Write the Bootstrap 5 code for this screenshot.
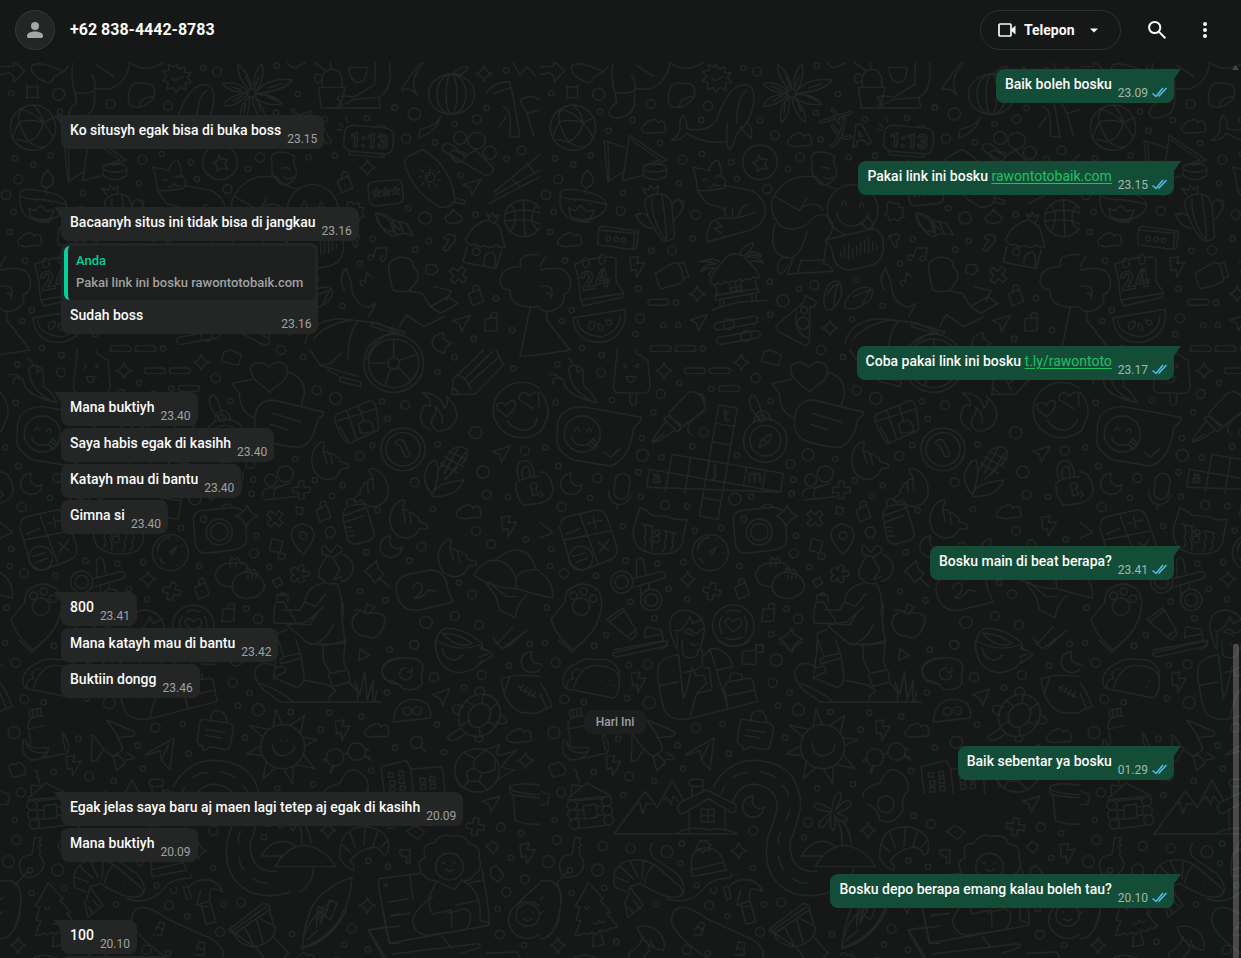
<!DOCTYPE html>
<html lang="id">
<head>
<meta charset="utf-8">
<meta name="viewport" content="width=device-width, initial-scale=1">
<title>+62 838-4442-8783</title>
<link href="https://cdn.jsdelivr.net/npm/bootstrap@5.3.0/dist/css/bootstrap.min.css" rel="stylesheet">
<style>
:root{--pane:#161717;--in:#242626;--out:#144d37;--ink:#fafafa;--muted:#a0a1a1}
body{background:var(--pane);color:var(--ink);font-family:Roboto,"Liberation Sans",sans-serif;font-size:14px;line-height:20px}
.topbar{height:62px;padding:0 16px 2px 15px;background:var(--pane)}
.avatar{width:40px;height:40px;background:var(--in);border:1px solid #363838;color:#a5a6a6}
.contact{font-size:16px;font-weight:700;line-height:24px;margin:0 0 0 15px}
.call-btn{height:40px;width:141px;border:1px solid #2e3030;border-radius:20px;background:none;color:var(--ink);font-weight:700;padding:0 17px}
.call-btn svg:last-child{margin-left:auto;margin-right:1px}
.icon-btn{width:40px;height:40px;border:0;background:none;color:var(--ink);padding:0}
.chat{min-height:0}
.doodles{z-index:0;inset:0}
.thread{z-index:1;padding:7px 67px 0 61px}
.msg{position:relative;display:flex;align-items:flex-end;width:max-content;max-width:80%;min-height:34px;padding:0 7px 0 9px;border-radius:8px;margin-bottom:2px;background:var(--in)}
.msg p{margin:0;padding:5px 0 9px;font-weight:500}
.msg time{font-size:12px;line-height:16px;color:var(--muted);margin:0 0 2px 6px;white-space:nowrap}
.sent{align-self:flex-end;background:var(--out);padding-right:6px}
.sent time{color:#a1b8af}
.sent svg{margin:0 0 5px 4px}
.sent a{color:#21c063;text-underline-offset:2px;font-weight:400}
.tail{margin-top:10px}
.tail::before{content:"";position:absolute;top:0;left:-7px;width:15px;height:12px;background:inherit;clip-path:polygon(0 0,100% 0,100% 100%,7px 10px)}
.sent.tail::before{left:auto;right:-7px;clip-path:polygon(0 0,100% 0,8px 10px,0 100%)}
.thread>.msg:first-child{margin-top:0}
.with-quote{flex-direction:column;align-items:stretch;padding:3px 3px 0;height:91px}
.quote{background:#1d1f1f;border-left:4px solid #06cf9c;border-radius:6px;font-size:13px;line-height:20px;height:54px;padding:5px 12px 0 8px;color:var(--muted);font-weight:500}
.quote strong{display:block;font-weight:500;color:#06cf9c;margin-bottom:2px;line-height:20px}
.with-quote .line{padding:0 4px 0 6px;height:34px}
.day{background:#1d1f1f;color:var(--muted);font-size:12px;font-weight:500;line-height:24px;width:62px;border-radius:8px;margin:10px 5px 2px 0}
.bar{z-index:2;right:2px;width:6px;top:65%;bottom:0;background:#ffffff38;border-radius:3px 3px 0 0}
.bar-up{z-index:2;right:2px;top:3px}
</style>
</head>
<body class="d-flex flex-column vh-100 overflow-hidden">
<header class="topbar d-flex align-items-center flex-shrink-0">
  <div class="avatar rounded-circle d-flex align-items-center justify-content-center">
    <svg width="24" height="24" viewBox="0 0 24 24" fill="currentColor" aria-hidden="true"><circle cx="12" cy="8" r="4"/><path d="M4 18.2v-.8c0-.9.4-1.600 1.200-2.100C7 14 9.400 13.400 12 13.400s5 .6 6.800 1.900c.8.5 1.200 1.200 1.200 2.100v.8c0 1-.8 1.800-1.800 1.800H5.800c-1 0-1.800-.8-1.800-1.800z"/></svg>
  </div>
  <h1 class="contact">+62 838-4442-8783</h1>
  <div class="ms-auto d-flex align-items-center">
    <button class="call-btn d-flex align-items-center" type="button">
      <svg width="18" height="16" viewBox="0 0 18 16" aria-hidden="true"><rect x="1" y="2" width="12" height="12" rx="1" fill="none" stroke="currentColor" stroke-width="1.700"/><path d="M13.500 7 17.500 3.500v9L13.500 9z" fill="currentColor"/></svg>
      <span class="ms-2">Telepon</span>
      <svg width="16" height="10" viewBox="0 0 16 10" aria-hidden="true"><path d="M4 3.500h8L8 7.500z" fill="currentColor"/></svg>
    </button>
    <button class="icon-btn ms-3" type="button" aria-label="Cari"><svg width="24" height="24" viewBox="0 0 24 24" fill="none" stroke="currentColor" stroke-width="2" aria-hidden="true"><circle cx="9.700" cy="9.500" r="5.600"/><path d="M13.800 13.600 20.400 20.200"/></svg></button>
    <button class="icon-btn ms-2" type="button" aria-label="Menu"><svg width="24" height="24" viewBox="0 0 24 24" fill="currentColor" aria-hidden="true"><circle cx="12" cy="6" r="2"/><circle cx="12" cy="12" r="2"/><circle cx="12" cy="18" r="2"/></svg></button>
  </div>
</header>

<main class="chat position-relative flex-grow-1 overflow-hidden">
  <svg class="doodles position-absolute w-100 h-100" aria-hidden="true">
    <defs>
      <path id="spark" d="M0-24Q5-5 24 0Q5 5 0 24Q-5 5-24 0Q-5-5 0-24Z"/>
      <path id="cloud" d="M-24 20a12 12 0 0 1-2-24a10 10 0 0 1 13-10a14 14 0 0 1 25 6a10 10 0 0 1 20 9a10 10 0 0 1-14 16q-7 6-14 2q-12 6-28 1z"/>
      <path id="bolt" d="M-22-26 4-30-2-10 22-12-2 32-4 8-18 12z"/>
      <path id="moon" d="M0-30a32 32 0 1 0 32 32q-10 10-22 4Q-10-6 0-30z"/>
      <path id="plane" d="M-26-8 26-24 0 24-6 2z"/>
      <path id="lock" d="M-20-8 12-22 24 14-8 28zM-6-14q-6-18 6-20t10 12M2 6h1"/>
      <path id="cross" d="M-8-26h16v18h18v16H8v18H-8V8h-18V-8h18z"/>
      <path id="hand" d="M-46 28q-6-40 16-60q16-10 12 14l2 16q10-14 20 0q12-8 18 4q14-2 16 12l26 4q10 14-18 16q-8 40-42 40q-36 0-50-46zM-14-2 0 26M6-2 18 26"/>
      <pattern id="wall" width="540" height="900" patternUnits="userSpaceOnUse" patternTransform="translate(0 -2)">
        <g fill="none" stroke="#242626" stroke-width="4.200" stroke-linecap="round" stroke-linejoin="round">
          <g id="upper" transform="scale(.3333)">
            <path stroke-width="20" d="M34 100h0M180 155h0M206 212h0M278 180h0M45 295h0M152 286h0M100 314h0M360 249h0M486 282h0M573 307h0M591 357h0M417 370h0M249 399h0M41 456h0M30 516h0M458 536h0M334 572h0M75 602h0M689 665h0M295 686h0M408 728h0M370 796h0M414 796h0M691 764h0M66 783h0M95 751h0M286 822h0M126 864h0M185 885h0M489 866h0M484 180h0M660 182h0M828 158h0M842 238h0M744 327h0M610 24h0M830 17h0M894 102h0M975 178h0M1101 174h0M926 292h0M1005 287h0M1184 143h0M777 687h0M948 660h0M1028 738h0M937 778h0M909 891h0M1080 611h0M1118 537h0"/>
            <path stroke="#161717" stroke-width="12" d="M34 100h0M180 155h0M206 212h0M278 180h0M45 295h0M152 286h0M100 314h0M360 249h0M486 282h0M573 307h0M591 357h0M417 370h0M249 399h0M41 456h0M30 516h0M458 536h0M334 572h0M75 602h0M689 665h0M295 686h0M408 728h0M370 796h0M414 796h0M691 764h0M66 783h0M95 751h0M286 822h0M126 864h0M185 885h0M489 866h0M484 180h0M660 182h0M828 158h0M842 238h0M744 327h0M610 24h0M830 17h0M894 102h0M975 178h0M1101 174h0M926 292h0M1005 287h0M1184 143h0M777 687h0M948 660h0M1028 738h0M937 778h0M909 891h0M1080 611h0M1118 537h0"/>
            <path stroke-width="31" d="M332 132h0M504 138h0M651 35h0M427 299h0M780 292h0M705 226h0M682 387h0M467 464h0M242 453h0M55 358h0M18 405h0M396 571h0M300 775h0M823 675h0M843 870h0"/>
            <path stroke="#161717" stroke-width="23" d="M332 132h0M504 138h0M651 35h0M427 299h0M780 292h0M705 226h0M682 387h0M467 464h0M242 453h0M55 358h0M18 405h0M396 571h0M300 775h0M823 675h0M843 870h0"/>
            <circle cx="176" cy="103" r="18"/><circle cx="729" cy="722" r="18"/>
            <path d="M0 20h42V4l32 28-32 34V50L28 38 0 44M94 20Q92 50 145 68Q160 66 160 52L192 34 205 18M94 20q10-14 40-6t56 20M79 78q18 6 36 0q-6 18 0 36q-18-4-36 0q6-18 0-36z"/>
            <circle cx="99" cy="203" r="68"/><path d="M60 148Q96 152 130 188Q148 210 160 232M130 188Q90 176 57 186L40 226M57 186Q50 150 80 140M57 186Q68 220 86 246Q110 262 128 262M130 188Q120 230 86 246L50 238M130 188Q124 158 100 136M130 188l34-16"/>
            <path d="M218 10Q212 60 224 96 Q256 106 284 92Q288 60 274 44M290 16 342 50M390 6Q380 70 330 86Q310 90 284 84M224 96 230 128Q200 150 210 168Q230 180 250 170Q284 160 284 120V92M396 12Q440 40 490 8"/>
            <path d="M414 68 450 72Q466 78 464 100Q462 120 440 132Q420 148 392 138Q382 126 386 104Q388 72 414 68zM420 142Q414 120 440 114L464 106"/>
            <path d="M528 12l8 16 18-8 0 18 18 0-10 14 12 14-18 4 2 20-18-8-12 16-8-16-18 6 2-20-16-6 12-12-12-16 18-2 0-18 16 8zM515 54l10 8 24-12"/>
            <path d="M394 240Q420 226 420 208Q416 180 430 166Q446 186 440 206Q500 220 530 180Q560 90 600 76Q640 66 642 110Q640 180 590 220Q580 260 568 270Q556 250 562 190M622 90Q590 110 590 190M394 240q26 4 46-20Q500 256 560 244M582 138h1M600 200Q616 220 634 236Q640 200 620 186"/>
            <circle cx="755" cy="100" r="12"/><path d="M748 88Q708 50 714 12Q748 40 756 88M764 90Q756 40 786 12Q796 50 772 90M770 92Q810 50 876 60Q850 96 768 100M768 104Q820 100 846 132Q800 140 764 112M762 112Q800 150 796 186Q764 166 756 114M748 112Q752 160 726 188Q710 150 746 112M742 106Q710 140 672 138Q676 108 740 100M742 94Q700 104 668 72Q700 58 744 92M738 50 750 78M776 50 766 78M806 84l40-14M800 108l30 14M776 130l6 24M736 130l-4 30M700 122l28-14M694 80l30 10"/>
            <path d="M956 82H1036L1020 144H964zM968 80Q960 30 996 28Q1030 30 1026 80M964 46q-24-12-20 10t20 6M944 8 980 34M992 6V26M1048 22H1100Q1102 66 1074 68Q1046 60 1048 22zM1126 6 1124 74 1060 112Q1012 100 1012 118 1030 124 1012 138M1012 144H1142L1136 112 1060 118 1012 144M1168 6Q1180 90 1136 112M862 6q8 20 26 16l28-14"/>
            <use href="#cloud" x="342" y="198"/><use href="#cloud" x="780" y="238"/><use href="#cloud" x="90" y="538"/>
            <path d="M192 242 204 366 248 336M192 242 256 262M204 250 208 362M268 226 248 362 310 346M268 226 380 300 340 316M274 240 360 300 310 318"/><ellipse cx="345" cy="324" rx="35" ry="12"/><path d="M310 324V346Q344 372 380 346V324"/>
            <path d="M844 186 932 158M878 150Q890 160 896 186M914 176Q900 250 874 258M878 200Q910 246 930 230" stroke-width="12"/><path stroke="#161717" d="M844 186 932 158M878 150Q890 160 896 186M914 176Q900 250 874 258M878 200Q910 246 930 230"/>
            <path d="M938 262 948 196Q956 188 966 194L994 246Q990 256 980 250L972 240 952 242 948 260zM958 214 956 230 966 230z"/>
            <rect x="1032" y="200" width="148" height="78" rx="24" transform="rotate(5 1106 240)"/><path d="M1048 272v12l104 8v-10M1134 200q12-10 26 6M1028 200l-10-10M1044 188l-6-14M1026 210l-14-2"/>
            <text x="1048" y="258" font-family="Roboto,sans-serif" font-size="58" font-weight="700" transform="rotate(4 1048 258)">1:13</text>
            <circle cx="660" cy="307" r="52"/><path d="M656 284l8 14 18 0-8 14 10 16-18-4-14 10-2-18-12-8 16-6z"/>
            <path d="M142 330Q108 372 138 384Q180 370 142 330zM60 406Q54 480 126 484Q198 470 200 434M60 406Q60 380 116 392 Q190 400 200 434Q150 420 100 418Q66 414 60 406zM118 486h32M92 470 86 444 104 452 122 436 140 454 162 450 152 474Q120 486 92 470zM104 422h1M130 418h1M152 432h1M138 384v20"/>
            <path d="M320 404 306 384 326 390 330 376 342 388 354 378 352 402M316 440Q306 410 350 402Q390 400 396 440L404 530Q390 546 370 542Q330 500 316 440zM336 416Q332 480 378 540M366 408Q376 470 380 536M396 440Q400 410 432 424Q430 456 402 480M336 506Q300 500 288 466Q300 452 326 470M286 464h16M416 418l14 20"/>
            <path d="M176 508Q180 496 196 500L296 514 290 560Q284 570 270 568L176 554Q170 550 176 508zM178 510 284 520 294 514M284 522 280 566"/><circle cx="205" cy="536" r="7"/><circle cx="229" cy="538" r="7"/><circle cx="251" cy="541" r="7"/>
            <path d="M458 322Q490 326 506 332Q516 300 534 300Q546 330 544 346L558 362 552 384Q500 396 472 390Q470 350 458 322zM490 362q6-10 12 0M528 352q6-8 14-2M506 380q12 4 16-10 4 12 20 6M552 376 636 392Q680 420 676 460Q670 500 610 516L500 546Q500 480 540 474Q600 480 646 456M500 430 474 394M500 430 552 446 560 472M596 470Q600 440 622 434M556 440v24M578 442v26M530 484l16 16-24 6 24 14"/>
            <path d="M702 408Q730 360 780 350L828 350Q850 380 894 388M702 408 778 452 800 416M702 408Q680 450 720 496Q750 520 800 494Q850 436 878 490Q880 520 860 536M706 490Q680 580 740 594 Q780 600 802 512M790 440Q830 420 850 452M816 310Q806 280 836 276 Q870 276 884 290L880 304 890 334Q890 350 880 360Q850 390 830 360L816 340zM846 324q18-4 24 4M850 350q16 14 30 0M716 640Q704 600 740 590M744 642 758 596M772 642 784 600M716 640Q730 646 744 616M744 642 878 634Q870 610 850 612L860 540M784 602 850 600"/>
            <circle cx="938" cy="450" r="76"/><path d="M906 438q6-30 14 0M958 442q6-30 14 0M890 460Q900 500 940 498Q980 490 984 460M962 486 982 508Q1004 506 1000 490L984 472"/><path fill="#161717" d="M856 540 1000 506Q1034 520 1030 560Q1030 610 980 620L930 630Q880 630 874 560z"/><path d="M902 574v16M914 560v30M926 552v46M938 566v26M950 558v30M962 546v36M974 544v34M986 534v44M998 546v24M1010 554v12"/>
            <path d="M1042 430q10-10 18 2l16-4 2 14 14 2-6 14 8 12-14 4-4 10-14-8-14 6-4-14-10-4 8-10zM1046 528 1066 562 1074 556 1068 544Q1088 530 1072 522zM1128 460Q1132 510 1178 516Q1180 470 1128 460M1176 486 1200 510M1114 600a8 8 0 1 1 6-8l8-28h34l-6 32a8 8 0 1 1-6-8M1090 676a8 8 0 1 1 6-8l4-30 14 12"/>
            <path d="M104 612 140 600M150 598 184 592M196 592 220 592Q228 594 228 602V664L250 696 246 712 130 738 122 720 250 700M122 720 116 660 104 612"/><ellipse cx="138" cy="608" rx="10" ry="15"/><ellipse cx="186" cy="598" rx="10" ry="15"/>
            <text x="126" y="692" font-family="Roboto,sans-serif" font-size="76" font-weight="700" transform="rotate(-10 130 692)">24</text>
            <use href="#bolt" x="292" y="620"/><path d="M346 640 400 608Q416 604 424 628L430 660Q426 672 364 686Q354 680 346 640zM420 610 432 606 446 650 432 654"/>
            <path d="M510 660 520 640 560 590Q580 574 610 588L650 630 658 650Q650 660 640 650 630 666 620 654 608 670 598 658 584 670 576 660 564 674 556 664 540 680 532 668 516 682 510 660zM526 676 532 706 652 686 646 660M568 672 574 696 606 690 602 666M586 670 590 694M570 684 604 678M524 706 654 686 656 698 528 720zM540 720v20M552 718v20M636 704v20M648 702v20M518 750 540 742 580 730 620 724 680 722M600 586Q600 560 640 548Q640 566 614 586 Q650 564 664 590Q640 580 620 590Q660 590 670 610 Q650 600 630 604M540 606Q520 590 478 606Q500 600 530 612Q490 610 482 636Q500 620 526 624Q500 640 510 650"/>
            <use href="#spark" x="472" y="702"/><use href="#spark" x="870" y="804"/><use href="#plane" x="476" y="788"/>
            <rect x="324" y="718" width="62" height="18" rx="9"/><rect x="331" y="857" width="62" height="18" rx="9"/><rect x="406" y="857" width="62" height="18" rx="9"/>
            <path d="M98 774 256 748Q262 820 200 844Q110 860 98 774zM112 780Q120 830 190 830Q240 810 240 766M150 786Q140 806 152 810Q170 800 164 784zM176 790Q170 810 186 812Q196 800 176 790zM196 780Q200 800 216 792Q220 780 196 780"/>
            <g transform="rotate(-10 590 790)"><rect x="522" y="778" width="132" height="22" rx="11"/><circle cx="566" cy="789" r="16"/><rect x="522" y="822" width="132" height="22" rx="11"/><circle cx="612" cy="833" r="16"/></g>
            <path d="M796 706 830 726 820 742 810 742 808 848Q800 860 790 854L716 816Q700 804 714 792L792 726zM770 754Q760 820 804 834"/><circle cx="790" cy="790" r="18"/><circle cx="792" cy="750" r="10"/>
            <path d="M860 750Q840 720 868 672Q896 650 904 680Q910 720 880 744Q870 754 860 750zM862 704Q880 670 896 672Q880 700 884 740M914 742Q912 710 960 684Q994 676 998 696Q996 726 950 744Q920 750 914 742zM940 710 990 690Q980 710 966 736"/>
            <path d="M0 620Q20 580 20 590M0 630Q90 610 92 670Q90 700 70 704Q80 740 30 754Q10 756 0 744M20 750V780L90 870 0 884M0 680Q40 670 36 706M20 700Q34 700 34 714"/>
          </g>
          <g transform="scale(.3444 .3333)">
            <ellipse cx="1311" cy="103" rx="67" ry="60"/><ellipse cx="1311" cy="103" rx="42" ry="60"/><ellipse cx="1311" cy="103" rx="16" ry="60"/><path d="M1284 48q30-16 56 0M1282 158q28 12 54 0M1316 42q16-24 42-22 0 18-30 26M1280 170l-4 8q-10 36-60 56l4-26q40-8 56-30M1220 10Q1180 60 1166 90 1190 80 1210 104 1186 60 1228 10"/>
            <use href="#spark" x="1405" y="41"/><path d="M1410 100Q1440 60 1480 66L1490 110 1510 232 1480 228Q1490 150 1460 140M1432 100 1480 84M1510 120Q1540 100 1568 120M1510 120 1530 160 1568 150M1490 10 1510 46 1530 20 1556 48M1530 160 1550 230M1450 200 1470 170"/>
            <path d="M1286 256Q1300 244 1320 260L1350 290 1380 270 1430 320Q1436 346 1410 346L1300 280Q1280 270 1286 256zM1330 308Q1300 290 1308 276Q1322 264 1332 280Q1350 270 1354 286Q1350 300 1330 308"/><circle cx="1336" cy="234" r="19"/><circle cx="1384" cy="242" r="25"/><circle cx="1422" cy="278" r="19"/>
            <rect x="1070" y="362" width="100" height="72" rx="18" transform="rotate(-6 1120 398)"/><text x="1080" y="428" font-family="Roboto,sans-serif" font-size="64" stroke-width="3" transform="rotate(-6 1120 398)">***</text><use href="#spark" x="1067" y="323"/><use href="#lock" x="1000" y="370"/>
            <path d="M1226 268 1186 290Q1172 298 1176 314Q1200 400 1280 442Q1330 440 1318 400Q1300 310 1226 268zM1318 412 1350 422 1348 432 1316 426M1234 352a14 14 0 1 1 14 14a10 10 0 1 1 0-20M1248 322v10M1276 334l-6 6M1278 362l-8-2M1266 380l-4-8M1246 384v-8M1224 376l6-8M1216 350h8M1222 330l8 6"/>
            <use href="#plane" x="1370" y="382"/><path d="M1434 396 1568 284M1440 404 1568 330M1420 430 1568 350M1490 360l20 20M1530 310l20 26"/>
            <circle cx="1520" cy="475" r="55"/><path d="M1470 460Q1520 440 1572 460M1520 420 1524 530M1484 434Q1510 470 1482 516M1556 440Q1530 480 1562 510M1466 484Q1520 470 1572 494"/>
            <path d="M1092 458Q1120 460 1140 480L1180 490 1200 526 1170 520 1140 530 Q1100 510 1092 458zM1140 480 1150 526M1160 488 1172 518M1298 486Q1284 470 1306 464L1316 448 1330 464Q1350 470 1336 486Q1310 494 1298 486z"/><path d="M1290 530l12-8 20 6v14l-26 32-10-6 18-30-14-2z"/>
            <path d="M1352 540Q1370 490 1420 480L1450 500 1466 560Q1450 566 1440 554 1420 570 1410 556 1390 566 1380 552 1360 560 1352 540zM1356 560 1344 606 1440 626 1456 570M1406 618Q1400 580 1430 576 1444 590 1436 622M1420 480 1414 462 1424 470 1430 456 1436 470 1448 464 1438 490"/><circle cx="1383" cy="575" r="11"/>
            <path d="M1240 614l24 0 8 18-14 12-20-4-2-16z"/><use href="#cross" transform="translate(1330 645) rotate(40)"/><use href="#lock" transform="translate(1380 710)"/><use href="#lock" transform="translate(1425 790) rotate(20)"/>
            <path d="M1000 690Q980 660 1004 624L1020 670Q1020 730 1070 742L1090 730M1130 640Q1120 600 1160 592Q1200 590 1200 620 1220 640 1212 660L1190 690Q1170 700 1140 690zM1190 694 1226 700 1250 740 1280 760 1330 730 1300 710 1250 740M1260 680l50 12-14 30M1180 764 1230 800 1290 770M1070 770 1090 734M1180 764 1160 800"/>
            <path d="M1568 584Q1500 580 1512 620Q1450 620 1452 670Q1460 690 1480 690Q1480 750 1568 740M1540 740 1510 890 1568 884"/>
            <path d="M886 850Q900 780 990 776L1100 790 1160 820Q1100 810 1062 900M910 836Q950 790 1020 780M1010 900Q1010 820 1040 784M1078 786 1176 816 1170 826 1080 800z"/>
            <path d="M1254 850 1260 830 1286 818 1290 838 1310 850 1296 862 1290 880 1266 870z"/><use href="#plane" x="1340" y="790"/>
            <g stroke-width="4"><circle cx="1203" cy="162" r="18"/><circle cx="1384" cy="178" r="13"/><circle cx="1179" cy="236" r="13"/><circle cx="1515" cy="271" r="13"/><circle cx="1234" cy="474" r="18"/><circle cx="1147" cy="143" r="8"/><circle cx="1413" cy="144" r="8"/><circle cx="1320" cy="192" r="8"/><circle cx="1263" cy="247" r="8"/><circle cx="1470" cy="31" r="8"/><circle cx="1337" cy="346" r="8"/><circle cx="1471" cy="297" r="8"/><circle cx="1186" cy="445" r="8"/><circle cx="1381" cy="464" r="8"/><circle cx="1245" cy="543" r="8"/><circle cx="1206" cy="569" r="8"/><circle cx="1440" cy="715" r="8"/><circle cx="1487" cy="811" r="8"/><circle cx="1376" cy="836" r="8"/></g>
          </g>
          <g transform="translate(0 290) scale(.3333)">
            <path stroke-width="20" d="M52 43h0M184 15h0M47 158h0M215 151h0M340 187h0M418 99h0M514 116h0M16 292h0M306 264h0M457 289h0M365 322h0M55 349h0M295 367h0M302 440h0M150 444h0M442 469h0M591 316h0M760 389h0M755 431h0M634 440h0M543 534h0M464 542h0M249 528h0M34 597h0M257 632h0M30 648h0M352 641h0M430 637h0M598 648h0M167 677h0M386 717h0M442 748h0M272 755h0M20 773h0M343 805h0M198 855h0M15 879h0M162 887h0M739 776h0M693 853h0M808 651h0M769 557h0M691 153h0M909 21h0M886 327h0M944 391h0M996 438h0M1028 406h0M1117 286h0M1163 206h0M1146 154h0M1133 481h0M1098 607h0M1080 724h0M1157 751h0"/>
            <path stroke="#161717" stroke-width="12" d="M52 43h0M184 15h0M47 158h0M215 151h0M340 187h0M418 99h0M514 116h0M16 292h0M306 264h0M457 289h0M365 322h0M55 349h0M295 367h0M302 440h0M150 444h0M442 469h0M591 316h0M760 389h0M755 431h0M634 440h0M543 534h0M464 542h0M249 528h0M34 597h0M257 632h0M30 648h0M352 641h0M430 637h0M598 648h0M167 677h0M386 717h0M442 748h0M272 755h0M20 773h0M343 805h0M198 855h0M15 879h0M162 887h0M739 776h0M693 853h0M808 651h0M769 557h0M691 153h0M909 21h0M886 327h0M944 391h0M996 438h0M1028 406h0M1117 286h0M1163 206h0M1146 154h0M1133 481h0M1098 607h0M1080 724h0M1157 751h0"/>
            <path stroke-width="31" d="M183 67h0M362 132h0M491 247h0M647 84h0M172 384h0M65 471h0M375 465h0M751 342h0M762 610h0M72 670h0M774 807h0M950 121h0M1079 318h0"/>
            <path stroke="#161717" stroke-width="23" d="M183 67h0M362 132h0M491 247h0M647 84h0M172 384h0M65 471h0M375 465h0M751 342h0M762 610h0M72 670h0M774 807h0M950 121h0M1079 318h0"/>
            <circle cx="307" cy="316" r="18"/><circle cx="585" cy="447" r="18"/><circle cx="804" cy="314" r="18"/><circle cx="1007" cy="145" r="18"/>
            <path d="M28 74q24-4 30 10 16 2 14 20Q90 140 170 158Q160 130 132 110 128 80 130 60 110 40 90 50 84 60 90 76 96 120 150 150M84 26q14 6 14 22M40 104q-4-24 20-22M110 50l2 18 10-8M0 124Q40 180 14 220 8 240 0 246"/>
            <path d="M232 0 220 110Q220 130 240 128L310 130Q334 126 330 100L324 30Q310 30 304 16 288 16 288 0M270 130v26q2 14 18 6l2-32M250 42l10 6-8 8M298 42l-12 6 10 6M256 80h34M262 82v10q10 12 20 0V82"/>
            <use href="#spark" x="372" y="62"/><use href="#spark" x="604" y="37"/><rect x="433" y="54" width="62" height="17" rx="8"/><rect x="508" y="54" width="62" height="17" rx="8"/><rect x="536" y="107" width="62" height="17" rx="8"/><path d="M332 4h60M404 4h62M664 34 672 6 690 0 724 14 716 46z"/>
            <path d="M386 190 440 132Q460 116 480 136L496 156Q500 176 480 190L430 230 388 200M372 206 388 196 424 234 412 246zM376 216 344 258 336 278 360 270 406 240M338 276 372 252M470 130Q500 130 490 160M444 230Q440 250 456 254M496 184Q460 200 446 226"/>
            <path d="M536 165 592 174 534 508 478 498zM396 313 730 370 722 426 320 412 328 358 386 368zM528 220 584 229M518 276 574 285M386 368 722 426 M508 332 562 342M498 388 552 398M488 444 542 452M452 322 434 430M508 332 498 388M620 352 610 408M676 362 668 418M386 368 376 424"/>
            <g font-family="'DejaVu Sans',sans-serif" font-size="46" stroke-width="3"><text x="550" y="212">t</text><text x="336" y="400">a</text><text x="518" y="380">j</text><text x="622" y="396">m</text></g>
            <circle cx="676" cy="272" r="65"/><circle cx="676" cy="272" r="46"/><circle cx="666" cy="204" r="11"/><path d="M658 292Q660 264 694 252 694 280 658 292zM666 264l18 16M642 216Q646 180 672 182 690 190 692 212M658 206Q630 180 628 150 632 130 644 138 660 160 668 202"/>
            <path d="M808 126 764 88Q744 60 756 46 780 26 806 52 830 26 856 44 874 66 850 92zM756 88 696 100 718 130Q720 190 764 204M862 66Q920 80 912 140L904 164M764 214Q766 150 820 150L970 186Q974 196 954 206 940 280 900 292 840 290 790 270 760 250 764 214zM818 190 904 216M810 222 864 240"/>
            <path d="M52 250Q46 170 130 170L304 202Q306 212 282 232 270 330 210 348L100 330Q40 300 52 250zM192 306l20 16 24-24M214 320l26-24"/><circle cx="127" cy="252" r="54"/><path d="M104 242q8-20 14 0M140 246q8-20 14 0M94 260Q100 286 130 286 150 284 158 266M144 284l20 14M154 276l18 14M160 268l14 14"/>
            <use href="#moon" x="94" y="400"/><rect x="224" y="370" width="44" height="78" rx="22" transform="rotate(8 246 408)"/><path d="M206 420Q204 456 234 464 264 464 274 434M234 464l-4 14M0 366Q30 364 40 420 36 450 0 460M0 424l10 10-10 8M0 516 38 548 0 564"/>
            <path d="M62 522Q60 510 80 500L170 480Q190 480 200 500L230 590Q236 620 210 630L130 660Q90 660 80 600L58 530M120 496 172 636M72 570 216 542M78 552 120 536M142 520 188 510M160 498 168 536M174 576 206 602M206 570 178 606"/><circle cx="122" cy="625" r="36"/><path d="M98 620l38-12M106 638l38-14"/>
            <path d="M282 530 300 472Q320 480 336 496L386 500Q410 514 442 508L430 560Q430 600 390 610 330 620 292 590 274 560 282 530zM304 522 342 530M370 542 410 550M314 526q8 20-2 36 10 10 0 30M334 530q8 20-4 40 10 10 4 30M376 546q8 20-4 30 8 16-4 30M398 548q6 20-2 26 6 16-4 28M342 544q12-10 20 4l-10 10z"/><circle cx="349" cy="568" r="10"/>
            <circle cx="511" cy="608" r="54"/><path d="M472 602Q480 564 508 562M480 626q6 12 14 14M508 606l22-16-14 24zM530 570h1M546 588h1M552 608h1M546 630h1M530 646h1" />
            <path d="M580 510Q580 480 620 480L700 472Q736 476 736 510L740 570Q738 594 700 600L620 610Q590 610 586 580zM664 472q20-20 36 0"/><circle cx="658" cy="546" r="39"/><circle cx="658" cy="546" r="26"/><circle cx="611" cy="508" r="9"/><path fill="#161717" d="M742 466Q750 490 772 498 750 508 738 530 732 508 708 498 734 490 742 466z"/>
            <circle cx="812" cy="390" r="18"/><circle cx="856" cy="372" r="24"/><path d="M788 440Q784 410 820 414L870 400M792 450 890 440M822 444Q816 410 850 408"/><use href="#cross" x="904" y="420"/><use href="#cross" transform="translate(825 506) rotate(45)"/>
            <path d="M890 470l20 4-4 20-18-4zM816 566l32 8-8 34-32-6zM836 608l20 4-4 16-18-2zM818 692l20-10 10 18-20 12zM974 546l10-14h16l8 14-10 16h-16zM910 614Q870 570 874 550 880 522 910 522 942 530 942 556 940 580 910 614"/><circle cx="909" cy="557" r="11"/>
            <use href="#lock" x="968" y="488"/><use href="#lock" x="604" y="720"/><use href="#lock" transform="translate(684 792) rotate(22)"/><use href="#cross" transform="translate(515 724) rotate(14)"/><use href="#spark" x="443" y="688"/>
            <path d="M1008 194 1110 152Q1124 150 1130 180L1136 240 1048 280Q1030 280 1004 210zM1008 214 1130 176M1040 180 1056 226M1076 168 1090 210M1020 230 1046 276M1056 228 1070 268M1076 222q30-20 40 0t0 24l-34 4z"/>
            <use href="#hand" transform="translate(985 314) rotate(10)"/><use href="#hand" transform="translate(1108 398) scale(-1 1) rotate(30)"/>
            <path d="M1030 498 1100 472M1028 498 1042 566Q1050 584 1070 582L1110 570Q1126 560 1122 546L1100 474M1028 498Q1030 470 1056 466L1090 462 1100 474M1040 466Q1038 444 1056 448 1070 450 1070 464M1036 516 1092 496M1040 532h16M1046 544h12M1048 558h16"/>
            <circle cx="245" cy="696" r="20"/><circle cx="245" cy="696" r="33"/><circle cx="334" cy="750" r="19"/><circle cx="334" cy="750" r="32"/><path d="M278 686 366 664Q380 672 374 684L278 712M290 684V630Q302 616 310 630L318 674M300 710 304 740M326 700 328 718"/>
            <path d="M646 672Q660 634 700 640 740 630 748 660M646 672Q650 710 694 710M690 634l4-12 10 8 10-8 8 18M696 712Q700 670 740 666 790 670 794 712 780 746 740 746 700 740 696 712zM736 666l4-12 10 8 12-4 8 12M694 640l-4 12M708 640v12M744 674v12M758 672l-4 14M770 676l-4 10"/>
            <path d="M100 900Q40 850 34 806L74 758Q76 716 100 712 120 696 150 706 190 720 184 770 180 840 100 900"/><circle cx="123" cy="770" r="26"/><circle cx="100" cy="737" r="11"/><circle cx="131" cy="724" r="11"/><circle cx="159" cy="746" r="11"/><path d="M0 668Q40 690 38 744L0 736"/>
            <path d="M200 808 248 774 288 840 260 860zM208 816 252 782M288 844 290 854 274 870 264 862M314 864Q312 840 320 830 340 836 352 836 370 838 366 854L372 876M220 900 370 872Q386 872 382 888L360 900M316 862 366 852"/>
            <path d="M390 840Q384 780 440 780 490 790 494 840L480 900M390 840Q400 880 412 900M404 840Q420 850 440 820L450 800 458 820 490 806M436 842q20-10 22 4 10 10 24-6l10-4M432 846l30 12M450 880q14 10 24 2M412 850V890"/>
            <circle cx="580" cy="827" r="62"/><path d="M580 846 560 826Q550 810 562 806 574 804 580 816 588 804 600 808 608 816 602 828zM546 850Q530 820 546 800M560 786Q580 776 600 786M614 800Q626 820 616 850M556 864Q580 874 606 862M716 866Q746 860 754 836 762 860 788 866 766 876 756 900M746 900Q740 876 716 866M648 900v-16h22v16M52 870"/>
            <path d="M966 600Q964 586 976 588L992 608 1010 586Q1030 590 1026 604L1000 622 966 612zM980 620Q950 660 958 684L970 690Q976 706 1010 700M1000 626 1020 660 1000 690 1024 680M1030 614Q1064 630 1060 660 1050 690 1024 694M970 700Q920 710 914 756L946 770 976 732M1010 700Q1030 740 1024 790L1036 880 930 884 862 826 920 816 970 772M914 756 900 780 850 780M822 820Q820 770 830 756L850 756 892 820 826 820M830 750V736H864V756M836 736Q850 722 860 736M940 884Q980 870 1000 824M832 900V850L860 840M1030 760V800M898 824 930 824 950 790"/>
            <path d="M876 656q14-10 18 6 2-20 14-16 10 4-2 20 20-6 22 4 0 12-20 8 10 18-2 20-12 2-12-14-12 16-20 8-6-10 10-18-18-2-8-18M1094 664 1130 632 1134 656 1152 672 1124 698 1112 680zM1138 684 1168 710M1064 780Q1090 780 1096 790L1100 762 1124 770Q1110 790 1100 792 1150 780 1156 810 1150 850 1120 866L1098 858Q1070 860 1058 830 1050 800 1076 788"/>
          </g>
          <g transform="translate(0 290) scale(.3444 .3333)">
            <circle cx="1143" cy="40" r="87"/><circle cx="1143" cy="40" r="73"/><circle cx="1143" cy="40" r="17"/><path d="M1143 23V-30M1158 32 1210 14M1156 52 1192 90M1134 56 1118 106M1126 38 1072 40M900 0 930 46 960 40 990 10M930 46 1040 80M950 60 980 76M986 80 1050 96 1046 110 986 94z"/>
            <path d="M1316 88 1404 0M1316 88 1312 134 1380 132 1462 44 1440 0M1330 74 1350 86 1368 120M1350 86 1430 4M1360 102 1450 20M1314 112 1332 130"/>
            <circle cx="1515" cy="180" r="83"/><path d="M1470 200 1444 176Q1438 160 1452 158 1464 158 1470 166 1480 148 1494 152 1500 166 1488 184zM1548 176 1510 150Q1502 134 1518 128 1530 128 1538 138 1550 122 1564 128V170M1474 212Q1490 244 1530 240 1556 230 1560 206"/>
            <path d="M1250 240Q1210 220 1226 180 1230 160 1250 168 1254 150 1226 128 1280 130 1290 176 1306 150 1296 138 1330 170 1326 200 1320 240 1270 244 1240 220 1262 196 1270 180 1264 170 1290 196 1284 220"/>
            <circle cx="1170" cy="298" r="64"/><circle cx="1170" cy="298" r="50"/><path d="M1148 280Q1150 264 1170 270L1190 312Q1190 324 1176 320L1162 288z"/>
            <path d="M1256 436Q1220 390 1238 360 1248 330 1266 330 1280 370 1256 436 1260 400 1346 390 1330 440 1256 440M1274 360 1310 300Q1340 280 1356 300 1360 330 1330 350L1290 390M1290 320l56 30M1304 304l52 26M1280 340l50 30M1330 294 1290 370M1350 308 1306 376"/>
            <path d="M1498 400Q1520 380 1568 380M1498 400Q1496 440 1520 466L1568 460M1506 386Q1490 330 1530 332 1550 340 1552 380M1518 384Q1510 344 1534 350 1540 370 1540 380M1546 436v-18a10 10 0 1 1 10-2l8 18z"/>
            <use href="#hand" transform="translate(1184 490) rotate(16)"/><use href="#hand" transform="translate(1322 606) rotate(10)"/><use href="#cloud" x="1362" y="484"/><use href="#bolt" x="1478" y="528"/><use href="#moon" x="1135" y="588"/><use href="#plane" x="1456" y="312"/>
            <path d="M1376 676Q1400 630 1440 630 1500 640 1500 716 1430 716 1376 676zM1440 630Q1480 590 1520 604 1550 620 1556 660M1500 680Q1520 654 1568 660M1500 716 1568 736M1410 696 1440 740 1450 780 1496 804Q1500 760 1530 736M1420 696 1470 740 1500 740"/>
            <path d="M1150 720Q1150 680 1190 672L1250 660Q1296 660 1300 720L1316 756 1220 780Q1160 790 1150 720zM1200 716Q1200 696 1220 700 1236 720 1204 744 1220 750 1244 720L1264 724"/>
            <path d="M1264 900Q1264 850 1290 836 1340 830 1400 880V900M1284 850Q1330 850 1370 880 1330 900 1284 850M1430 862 1446 880 1490 830M1440 880 1460 896 1530 840 1476 890"/>
            <g stroke-width="4"><circle cx="1381" cy="248" r="18"/><circle cx="1402" cy="366" r="18"/><circle cx="1413" cy="434" r="13"/><circle cx="1524" cy="302" r="13"/><circle cx="1176" cy="165" r="13"/><circle cx="1204" cy="397" r="13"/><circle cx="1237" cy="817" r="18"/><circle cx="1382" cy="543" r="13"/><circle cx="1224" cy="590" r="13"/><circle cx="1426" cy="583" r="13"/><circle cx="1371" cy="733" r="13"/><circle cx="1321" cy="798" r="13"/><circle cx="1391" cy="825" r="13"/><circle cx="1203" cy="884" r="13"/><circle cx="1270" cy="66" r="8"/><circle cx="1320" cy="22" r="8"/><circle cx="1490" cy="56" r="8"/><circle cx="1270" cy="283" r="8"/><circle cx="1257" cy="478" r="8"/><circle cx="1475" cy="441" r="8"/><circle cx="1189" cy="632" r="8"/><circle cx="1333" cy="698" r="8"/><circle cx="1527" cy="568" r="8"/><circle cx="1538" cy="882" r="8"/></g>
          </g>
          <g transform="translate(0 580) scale(.3333)">
            <path stroke-width="20" d="M162 18h0M266 75h0M261 175h0M131 187h0M235 296h0M413 316h0M548 252h0M566 341h0M429 386h0M342 423h0M161 396h0M250 465h0M44 540h0M426 611h0M421 670h0M470 736h0M348 793h0M193 744h0M95 759h0M562 829h0M229 905h0M504 940h0M639 684h0M671 793h0M735 293h0M714 197h0M749 159h0M872 216h0M988 218h0M962 269h0M1084 230h0M1114 392h0M939 433h0M832 445h0M792 592h0M1105 662h0M1164 680h0M876 882h0M1033 914h0M1104 929h0M1122 527h0M1161 158h0M1169 29h0"/>
            <path stroke="#161717" stroke-width="12" d="M162 18h0M266 75h0M261 175h0M131 187h0M235 296h0M413 316h0M548 252h0M566 341h0M429 386h0M342 423h0M161 396h0M250 465h0M44 540h0M426 611h0M421 670h0M470 736h0M348 793h0M193 744h0M95 759h0M562 829h0M229 905h0M504 940h0M639 684h0M671 793h0M735 293h0M714 197h0M749 159h0M872 216h0M988 218h0M962 269h0M1084 230h0M1114 392h0M939 433h0M832 445h0M792 592h0M1105 662h0M1164 680h0M876 882h0M1033 914h0M1104 929h0M1122 527h0M1161 158h0M1169 29h0"/>
            <path stroke-width="31" d="M47 68h0M323 73h0M73 178h0M467 263h0M267 409h0M63 457h0M50 600h0M188 618h0M272 625h0M640 572h0M804 547h0M698 128h0M507 796h0M723 787h0M660 876h0M440 929h0M1055 866h0M1173 552h0"/>
            <path stroke="#161717" stroke-width="23" d="M47 68h0M323 73h0M73 178h0M467 263h0M267 409h0M63 457h0M50 600h0M188 618h0M272 625h0M640 572h0M804 547h0M698 128h0M507 796h0M723 787h0M660 876h0M440 929h0M1055 866h0M1173 552h0"/>
            <g><circle cx="42" cy="278" r="18"/><circle cx="328" cy="188" r="18"/><circle cx="709" cy="60" r="18"/><circle cx="775" cy="209" r="18"/><circle cx="173" cy="690" r="18"/><circle cx="25" cy="665" r="18"/><circle cx="381" cy="635" r="18"/></g>
            <path d="M100 146Q120 76 170 76 236 80 238 120 240 160 220 174L100 150Q66 150 68 120 74 84 110 70 140 50 170 60 220 50 238 96V116M80 146Q76 120 100 116 86 90 120 86M208 122h1M200 142h1M220 138h1"/>
            <use href="#bolt" x="296" y="126"/><path d="M56 0 96 36 134 0M216 40Q220 52 236 50L372 20Q386 12 382 0M216 40 370 4"/>
            <path d="M426 0 428 40Q430 56 460 52 476 46 474 28M356 76Q370 50 416 44L430 176 440 150 456 80M356 76Q350 110 358 136L414 126M358 136Q364 200 380 220 400 244 450 236L652 184 640 130Q640 110 620 116L560 126 552 146 564 204M552 170 646 150M488 50 510 28 564 204M488 28 486 78 460 92 468 108 490 104 500 130 470 160 516 150 508 84 488 82M430 98 460 92M510 26Q560 20 580 80L532 90M570 118Q566 96 590 100L606 104 606 116M536 0Q570 30 620 10L630 0M470 160 450 230"/>
            <path d="M608 34l40-4 0 44-42-2zM648 16l22 0 0 20-22 2zM716 8Q744 16 756 36 762 16 788 6M834 0 820 120M834 0 852 50 840 60 842 72 904 54 902 40 852 50M888 0 900 40M904 54 912 110Q910 140 890 142L820 112M768 120Q756 80 790 70 820 70 830 84 860 70 856 96L826 110M766 110Q780 150 812 164L840 186H1144M780 130Q840 150 880 186M910 120 980 134 1008 152Q980 170 990 184M970 10V60L990 100 1040 90 1030 60 1036 10M986 106 998 140 1050 126 1044 92M1050 130Q1080 150 1072 184M1064 124 1080 164 1094 94 1102 180 1120 120 1118 186M1124 184l6-30M910 0Q960 30 1040 0M1080 26 1108 46 1076 62z"/>
            <path d="M1200 56Q1150 60 1146 96 1150 130 1200 134M0 130Q20 150 36 200L0 214M0 160 20 206M0 70 8 80"/>
            <path d="M88 222Q84 206 104 208L122 204 124 226 90 232zM100 210v18M112 206v18M84 256Q84 236 110 230L132 228M84 256 92 310M190 280Q216 320 200 340L130 354M70 300 78 302Q90 330 130 322L146 324Q140 360 96 360 60 350 70 300zM80 310Q90 346 140 336M82 268 134 256M186 280 196 330"/>
            <path d="M276 284 274 364 290 362 310 330M320 240 392 270Q412 276 400 288L350 294M320 240Q360 290 368 330L338 350Q310 330 280 286M338 350 354 344 376 366 372 376M340 352 350 392 374 370M378 336 404 352Q400 362 380 358"/>
            <path d="M436 344 522 294 510 388 484 362 480 332 440 346M484 362 506 312"/><path d="M610 238 690 250Q702 256 700 270L690 320Q686 330 670 328L632 320 610 332 608 318Q590 314 592 300L600 246Q602 238 612 238zM634 238Q630 214 656 212 682 218 680 248M618 268 676 278M616 286 662 294"/>
            <circle cx="848" cy="320" r="66"/><path d="M842 302h1M860 304h1M816 310Q820 346 850 348 884 340 884 316M846 252 828 208 820 258M870 256 914 226 900 282M908 292 952 298 914 318M910 344 944 386 888 374M880 380 878 432 852 388M826 384 790 416 798 366M786 346 738 342 782 318M790 292 748 256 806 268"/>
            <use href="#bolt" x="1028" y="270"/><use href="#cloud" x="1132" y="270"/><use href="#bolt" x="220" y="376"/><circle cx="1005" cy="352" r="26"/><circle cx="1070" cy="335" r="26"/><path d="M1030 346q8-10 14-4M980 360q-10-8-10 2 2 6 10 0M1000 378q-14 16-6 22l8-20M1094 330q14-8 10 2M1092 348 1112 360 1108 352 1096 346"/>
            <path d="M26 382Q30 368 46 374 56 360 68 374L78 390 74 404 38 412zM104 390q12 6 6 18 8 6 8 20"/>
            <path d="M84 474 140 430 214 468M94 470V436L128 438M84 480 190 470"/><circle cx="96" cy="496" r="15"/><circle cx="98" cy="524" r="15"/><circle cx="103" cy="552" r="15"/><circle cx="200" cy="484" r="15"/><circle cx="202" cy="512" r="15"/><circle cx="206" cy="540" r="15"/><path d="M112 482 186 476M116 566 196 556M130 498 168 492 172 532 134 538zM112 510H130M114 536H134M170 500H186M172 526H188M0 454 30 464 22 494H0"/>
            <path d="M222 582H590M222 582 316 454 352 502 396 420 430 480M284 496 300 488 308 522 320 490 336 494M370 480 380 470 392 494 400 468 414 484M448 506V580M556 506V572M416 516Q406 500 424 486L500 450 588 494Q592 520 574 518L506 476 430 520Q418 522 416 516zM456 470V440M488 452V440M448 430Q446 418 462 418H482Q494 420 490 434 484 442 462 440 450 440 448 430M484 508H522V546H484zM503 508V546M484 527H522M410 580Q450 556 510 570 540 560 590 580M544 462 554 440"/>
            <path d="M520 440Q570 352 660 362 780 376 782 500 770 560 750 610 750 700 830 694M578 490Q590 440 640 432 710 440 712 500 706 540 684 590 660 720 760 760 820 776 870 756M580 412Q600 396 622 398M660 396Q690 400 704 412M726 436Q746 450 746 472M748 510 738 544M722 574Q710 600 718 610M716 650Q720 680 732 690M758 716Q780 730 800 730M900 756Q940 730 940 684"/>
            <use href="#moon" x="640" y="498"/><use href="#spark" x="596" y="632"/><use href="#spark" x="984" y="572"/><use href="#spark" x="54" y="916"/>
            <path d="M876 516Q820 510 822 494 830 480 876 510 880 460 900 456 910 470 886 510 920 470 934 486 940 500 890 520 930 530 918 544 900 550 884 526 890 560 880 572 866 566 874 526 850 570 838 562 834 540 876 516M890 540Q906 560 906 610M906 540Q930 570 934 612M784 648Q810 604 850 604 870 606 884 618M784 648H850M826 680Q860 616 920 616 980 630 1006 680z"/>
            <path d="M968 470Q970 440 1020 430 1040 380 1066 390 1110 410 1104 450 1080 480 1090 510 1060 560 1020 540 1010 500 980 490 968 480zM1142 380 1190 362M1142 380 1160 520H1200M1164 398h14v14h-14zM1168 422h14v14h-14zM1172 446h14v14h-14zM1190 520V482"/><circle cx="1038" cy="493" r="25"/>
            <path d="M1020 640Q1020 560 1100 560 1160 570 1166 610 1166 650 1150 644 1140 620 1120 622 1070 630 1050 664 1070 680 1060 690 1036 684 1028 666 1016 660 1020 640zM1024 614 1050 636M1050 578 1066 624M1096 562 1092 616M1134 574 1118 620M1160 604 1144 622"/>
            <path d="M104 592 122 594 118 608 124 616 114 622 122 636 118 644Q140 670 126 690 110 716 76 712 50 690 62 660 70 646 96 644zM84 694 44 736"/><circle cx="90" cy="691" r="8"/><path d="M0 724Q60 710 64 780 50 900 0 896M52 734Q70 760 56 840 40 880 20 890M0 780l8-8M0 820l10-6"/>
            <path d="M224 742Q212 680 260 664 310 650 350 680L420 740Q440 766 410 770 380 780 300 730L270 740 260 780M224 742 258 756M222 710 264 726M240 680 280 716M270 662 294 712M310 664 306 716M340 676Q316 700 314 730M370 738h1M260 780 254 786 264 832 272 826 310 796 290 768 272 744M264 800 280 820M280 780l20 26M338 608Q320 640 350 660L410 700Q450 750 420 770M380 776Q450 800 500 736 520 716 570 714 576 708 576 702M512 746q-4 14 10 14 14-4 6-18"/>
            <path d="M456 690Q446 630 490 624 540 620 550 668M452 690 550 668 560 690 458 710zM476 610l6-10 8 6 12-6 2 10 10 4-8 8 4 10-14-2-8 8-8-8-12 2 2-10z"/>
            <path d="M550 742 564 738 574 774 560 780zM566 744Q580 716 630 720 660 730 668 756 640 740 630 752L628 784 590 796 602 750M602 790 618 852 648 846 630 784M602 800h26"/>
            <path d="M145 728 106 800 120 802 108 840 122 842 106 886Q120 890 132 878 140 890 156 876 170 890 180 870 200 880 210 864 230 866 232 858L200 820 212 818 180 780 190 776zM162 880 158 920 192 914 182 878M134 802q10 14 14-2M160 850q16 6 16-10 14 14 18 4"/>
            <path d="M292 862Q330 850 360 880 380 910 370 932 310 920 292 862zM310 890Q300 920 266 940V954M318 900 330 930 310 954M330 900 344 924"/>
            <path d="M396 850Q390 804 430 802 460 806 500 836L640 900Q680 930 668 954M396 850Q410 890 500 954M466 870 480 846 494 852 484 886 460 884M590 930 596 906 614 908 612 946 584 944M470 860l20 8M588 922l22 6"/>
            <path d="M690 866 790 790 808 796 810 808 704 880zM690 866 688 874 704 882Q710 910 760 922 820 910 826 870L808 808M704 880 764 920 734 862M770 840 790 910M826 860 780 836M700 870 800 800M770 924 792 954M822 892 866 940 850 954M900 944q16-12 22 4 12-10 24 6M906 926Q910 840 1000 780M906 926Q1000 900 1040 806M950 860V830L970 812 960 850 984 806"/>
            <path d="M1200 858 1104 870 1150 954M1150 820 1170 910H1200M1174 826 1200 822M1000 954h20M100 954q30-16 70 0"/>
          </g>
          <g transform="translate(0 580) scale(.3444 .3333)">
            <path d="M1264 0Q1264 90 1330 98 1380 96 1400 60M1396 70 1430 46Q1428 34 1394 24M1390 52 1414 42M1284 24Q1290 60 1320 60 1338 56 1340 44M1264 0Q1330 40 1394 14M1290 44h1M1343 46h1"/>
            <path d="M1180 84a18 18 0 1 0 16 20M1196 84v12h-12M1110 80Q1130 50 1170 54 1230 50 1228 90 1220 110 1226 130 1210 156 1170 146 1160 126 1120 120 1106 100 1110 80z"/>
            <path d="M1456 116Q1500 100 1568 110M1456 116Q1460 190 1510 216 1550 224 1568 216M1480 112 1464 160M1506 140 1556 172M1510 152l8-16M1522 158l8-16M1534 166l8-16M1546 170l8-14"/>
            <path d="M1142 246Q1146 180 1200 178 1256 180 1250 234zM1172 216h1M1214 212h1"/><circle cx="1183" cy="214" r="12"/><circle cx="1212" cy="212" r="12"/>
            <ellipse cx="1392" cy="226" rx="58" ry="66" transform="rotate(35 1392 226)"/><ellipse cx="1392" cy="226" rx="30" ry="38" transform="rotate(35 1392 226)"/><path d="M1380 164Q1376 142 1396 142 1410 146 1406 166M1334 226Q1310 220 1314 200 1330 190 1346 202M1334 266 1300 290Q1304 310 1330 296L1350 282M1380 292Q1376 306 1392 306 1406 300 1400 286M1450 224Q1474 230 1470 248 1456 256 1440 244M1372 196 1354 180M1420 210 1446 190M1366 240 1340 256M1392 264 1394 290M1416 244 1440 256M1400 190 1402 164"/>
            <path d="M1256 164 1306 146 1286 196 1278 176z"/><use href="#cloud" x="1508" y="286"/><use href="#moon" x="1545" y="64"/><circle cx="1209" cy="307" r="18"/><path d="M1222 320l12 14"/>
            <circle cx="1385" cy="391" r="65"/><path d="M1354 396 1376 384 1400 400 1390 424 1360 424zM1350 340 1380 356 1406 334M1376 384V356M1336 440 1320 400M1360 424 1344 446M1400 400 1436 390 1440 360M1390 424 1416 450M1400 328Q1420 330 1452 312 1440 336 1444 346 1470 344 1500 330 1470 360 1456 380 1470 390 1494 390 1460 410 1444 420"/>
            <use href="#spark" x="1526" y="362"/><use href="#plane" x="1426" y="492"/><path d="M1106 380 1180 362 1192 384 1200 460M1106 380 1116 460M1194 388 1276 380Q1284 382 1286 392L1292 460M1128 398h14v14h-14zM1132 422h14v14h-14zM1158 394h14v14h-14zM1160 416h14v14h-14zM1220 414h14v14h-14zM1222 434h14v14h-14zM1248 410h14v14h-14zM1250 432h14v14h-14zM1132 442h14v14h-14zM1162 438h14v14h-14z"/>
            <path d="M1480 440Q1500 426 1568 436M1480 440Q1480 460 1568 464M1480 440V458L1490 466 1496 540Q1520 556 1568 552M1490 466 1568 474"/>
            <use href="#cross" transform="translate(1380 560) rotate(8)"/><path d="M1180 574 1206 556 1234 576 1212 598zM1206 576h2M1412 620l18-16 18 14-16 22zM1424 686 1440 676 1464 706 1446 726 1424 710z"/><use href="#bolt" x="1532" y="640"/><path d="M1160 630h30v40h-10v-20q-20 0-20-20z"/>
            <circle cx="1305" cy="680" r="40"/><path d="M1220 690Q1210 660 1236 652 1220 610 1260 610 1280 576 1310 590 1350 580 1360 610 1400 620 1390 650 1404 690 1380 700 1360 730 1340 720M1220 690Q1230 720 1270 724M1284 670h8M1316 668h8M1294 688q10 10 24 0M1270 724 1320 750 1340 720M1256 770Q1210 800 1198 840 1200 880 1240 886L1350 870Q1370 850 1366 820L1350 806 1300 820M1270 724Q1230 780 1256 822L1310 810M1340 720Q1400 750 1394 840L1420 850M1310 810 1312 860M1324 796 1390 780M1360 730 1400 720M1220 700 1100 716Q1096 730 1110 800L1130 910 1420 856Q1424 830 1400 690M1190 706 1200 780M1114 730l10 10M1124 730l-10 10M1130 786 1186 776M1136 828 1190 820M1070 870 1116 862M1070 870 1120 954M1140 942 1380 912Q1400 910 1392 922L1340 940M1284 890 1310 922"/>
            <path d="M1022 712Q940 740 906 800 880 860 878 924 960 890 990 830 1020 770 1022 712zM890 900 924 870M920 840 924 800 950 810 956 780 978 790 960 840 940 824z"/>
            <circle cx="1532" cy="840" r="55"/><circle cx="1532" cy="825" r="34"/><path d="M1500 796Q1530 760 1568 730M1516 816h4M1544 816h4M1520 836q12 12 24 0M1412 940 1500 936 1510 954"/><use href="#spark" x="1066" y="796"/>
            <g stroke-width="4"><circle cx="1260" cy="112" r="13"/><circle cx="1399" cy="105" r="13"/><circle cx="1203" cy="15" r="13"/><circle cx="1454" cy="562" r="13"/><circle cx="1524" cy="718" r="13"/><circle cx="1470" cy="756" r="13"/><circle cx="1451" cy="884" r="13"/><circle cx="1347" cy="143" r="8"/><circle cx="1269" cy="254" r="8"/><circle cx="1290" cy="337" r="8"/><circle cx="1147" cy="323" r="8"/><circle cx="1478" cy="77" r="8"/><circle cx="1513" cy="580" r="8"/><circle cx="1484" cy="654" r="8"/><circle cx="1445" cy="807" r="8"/><circle cx="1522" cy="915" r="8"/></g>
          </g>
        </g>
      </pattern>
      <symbol id="read" viewBox="0 0 16 12"><path d="M.5 7.500 4 10.500 11 2M6.500 10.500 14.500 2" fill="none" stroke="#53bdeb" stroke-width="1.500"/></symbol>
    </defs>
    <rect width="100%" height="100%" fill="url(#wall)"/>
  </svg>

  <div class="thread position-relative d-flex flex-column">
    <div class="msg sent tail"><p>Baik boleh bosku</p><time>23.09</time><svg width="16" height="12"><use href="#read"/></svg></div>
    <div class="msg tail"><p>Ko situsyh egak bisa di buka boss</p><time>23.15</time></div>
    <div class="msg sent tail"><p>Pakai link ini bosku <a href="#">rawontotobaik.com</a></p><time>23.15</time><svg width="16" height="12"><use href="#read"/></svg></div>
    <div class="msg tail"><p>Bacaanyh situs ini tidak bisa di jangkau</p><time>23.16</time></div>
    <div class="msg with-quote">
      <div class="quote"><strong>Anda</strong>Pakai link ini bosku rawontotobaik.com</div>
      <div class="line d-flex justify-content-between align-items-end"><p>Sudah boss</p><time>23.16</time></div>
    </div>
    <div class="msg sent tail"><p>Coba pakai link ini bosku <a href="#">t.ly/rawontoto</a></p><time>23.17</time><svg width="16" height="12"><use href="#read"/></svg></div>
    <div class="msg tail"><p>Mana buktiyh</p><time>23.40</time></div>
    <div class="msg"><p>Saya habis egak di kasihh</p><time>23.40</time></div>
    <div class="msg"><p>Katayh mau di bantu</p><time>23.40</time></div>
    <div class="msg"><p>Gimna si</p><time>23.40</time></div>
    <div class="msg sent tail"><p>Bosku main di beat berapa?</p><time>23.41</time><svg width="16" height="12"><use href="#read"/></svg></div>
    <div class="msg tail"><p>800</p><time>23.41</time></div>
    <div class="msg"><p>Mana katayh mau di bantu</p><time>23.42</time></div>
    <div class="msg"><p>Buktiin dongg</p><time>23.46</time></div>
    <div class="day align-self-center text-center">Hari Ini</div>
    <div class="msg sent tail"><p>Baik sebentar ya bosku</p><time>01.29</time><svg width="16" height="12"><use href="#read"/></svg></div>
    <div class="msg tail"><p>Egak jelas saya baru aj maen lagi tetep aj egak di kasihh</p><time>20.09</time></div>
    <div class="msg"><p>Mana buktiyh</p><time>20.09</time></div>
    <div class="msg sent tail"><p>Bosku depo berapa emang kalau boleh tau?</p><time>20.10</time><svg width="16" height="12"><use href="#read"/></svg></div>
    <div class="msg tail"><p>100</p><time>20.10</time></div>
    <div class="msg" style="width:108px"></div>
  </div>
  <svg class="bar-up position-absolute" width="7" height="5" aria-hidden="true"><path d="M0 5 3.500 0 7 5z" fill="#464747"/></svg>
  <div class="bar position-absolute"></div>
</main>
<script src="https://cdn.jsdelivr.net/npm/bootstrap@5.3.0/dist/js/bootstrap.bundle.min.js"></script>
</body>
</html>
